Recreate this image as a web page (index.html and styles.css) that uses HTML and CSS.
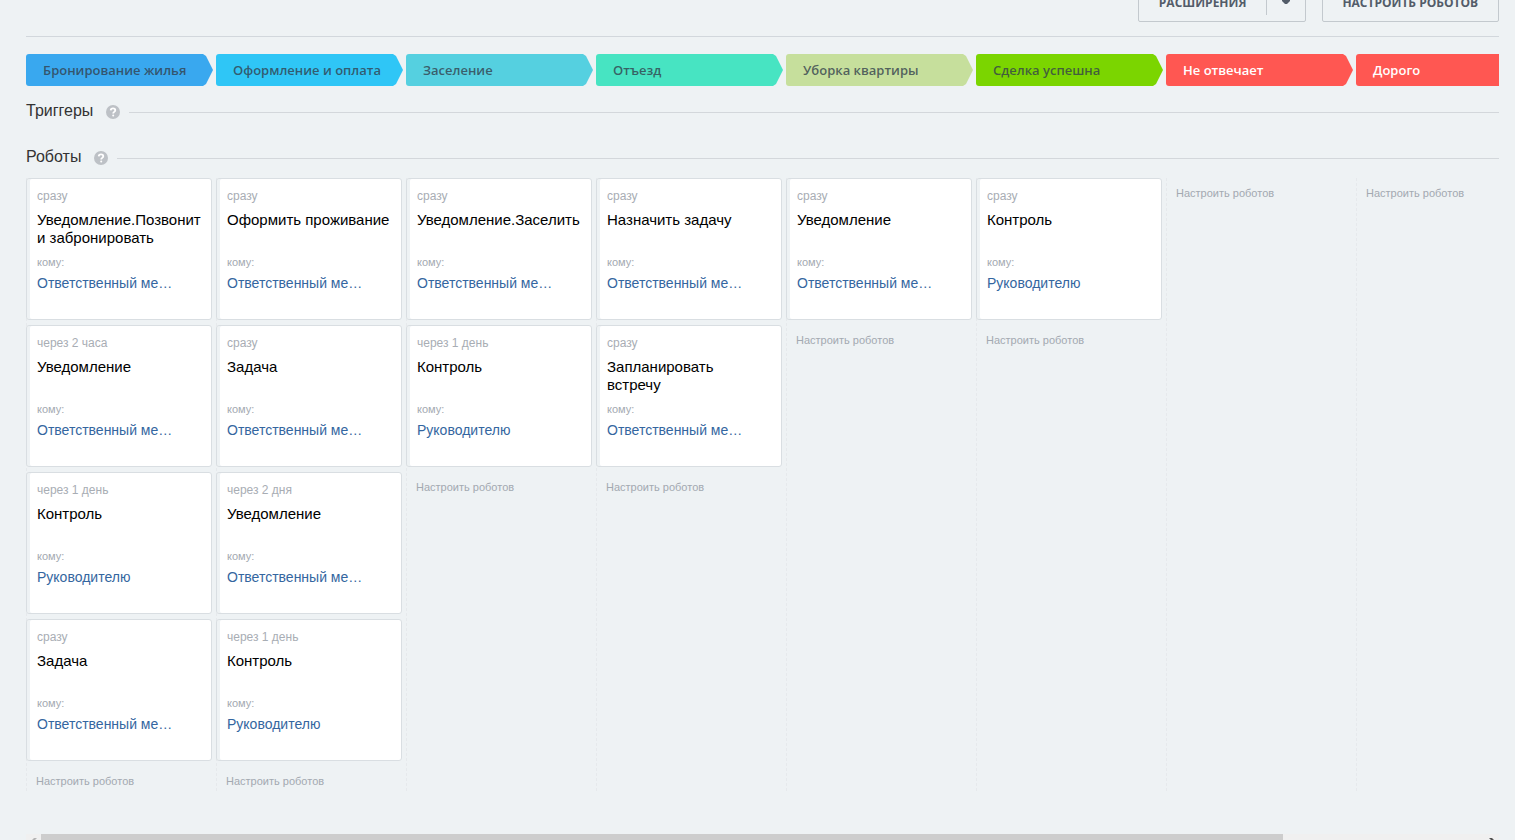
FILE: index.html
```
<!DOCTYPE html>
<html lang="ru">
<head>
    <meta charset="UTF-8">
    <meta name="viewport" content="width=device-width, initial-scale=1.0">
    <title>Роботы</title>
    <link rel="stylesheet" href="styles.css">
</head>
<body>
    <div class="page">
        <!-- Кнопки -->
        <div class="toolbar">
            <div class="btn-group">
                <button class="btn">Расширения</button>
                <button class="btn btn-arrow" aria-label="Меню">
                    <svg width="10" height="6" viewBox="0 0 10 6"><path d="M1 0h8v2L6 5H4L1 2z" fill="#535c69"/></svg>
                </button>
            </div>
            <button class="btn btn-single">Настроить роботов</button>
        </div>

        <!-- Стадии -->
        <div class="stages">
            <div class="stage stage-blue">Бронирование жилья</div>
            <div class="stage stage-sky">Оформление и оплата</div>
            <div class="stage stage-cyan">Заселение</div>
            <div class="stage stage-mint">Отъезд</div>
            <div class="stage stage-olive">Уборка квартиры</div>
            <div class="stage stage-green">Сделка успешна</div>
            <div class="stage stage-red">Не отвечает</div>
            <div class="stage stage-red">Дорого</div>
        </div>

        <h2 class="section-title">
            Триггеры
            <svg class="help" width="14" height="14" viewBox="0 0 14 14"><circle cx="7" cy="7" r="7" fill="#bdc1c6"/><path d="M4.700 5.400C4.800 4 5.700 3.400 7 3.400s2.300.7 2.300 1.900c0 1.500-2.100 1.600-2.100 3.100" fill="none" stroke="#fff" stroke-width="1.800"/><circle cx="7.200" cy="10.400" r="1" fill="#fff"/></svg>
        </h2>
        <h2 class="section-title">
            Роботы
            <svg class="help" width="14" height="14" viewBox="0 0 14 14"><circle cx="7" cy="7" r="7" fill="#bdc1c6"/><path d="M4.700 5.400C4.800 4 5.700 3.400 7 3.400s2.300.7 2.300 1.900c0 1.500-2.100 1.600-2.100 3.100" fill="none" stroke="#fff" stroke-width="1.800"/><circle cx="7.200" cy="10.400" r="1" fill="#fff"/></svg>
        </h2>

        <!-- Роботы по стадиям -->
        <div class="board">
            <div class="column">
                <div class="card">
                    <div class="time">сразу</div>
                    <div class="name">Уведомление.Позвонит и забронировать</div>
                    <div class="label">кому:</div>
                    <a class="person" href="#">Ответственный ме…</a>
                </div>
                <div class="card">
                    <div class="time">через 2 часа</div>
                    <div class="name">Уведомление</div>
                    <div class="label">кому:</div>
                    <a class="person" href="#">Ответственный ме…</a>
                </div>
                <div class="card">
                    <div class="time">через 1 день</div>
                    <div class="name">Контроль</div>
                    <div class="label">кому:</div>
                    <a class="person" href="#">Руководителю</a>
                </div>
                <div class="card">
                    <div class="time">сразу</div>
                    <div class="name">Задача</div>
                    <div class="label">кому:</div>
                    <a class="person" href="#">Ответственный ме…</a>
                </div>
                <a class="setup" href="#">Настроить роботов</a>
            </div>

            <div class="column">
                <div class="card">
                    <div class="time">сразу</div>
                    <div class="name">Оформить проживание</div>
                    <div class="label">кому:</div>
                    <a class="person" href="#">Ответственный ме…</a>
                </div>
                <div class="card">
                    <div class="time">сразу</div>
                    <div class="name">Задача</div>
                    <div class="label">кому:</div>
                    <a class="person" href="#">Ответственный ме…</a>
                </div>
                <div class="card">
                    <div class="time">через 2 дня</div>
                    <div class="name">Уведомление</div>
                    <div class="label">кому:</div>
                    <a class="person" href="#">Ответственный ме…</a>
                </div>
                <div class="card">
                    <div class="time">через 1 день</div>
                    <div class="name">Контроль</div>
                    <div class="label">кому:</div>
                    <a class="person" href="#">Руководителю</a>
                </div>
                <a class="setup" href="#">Настроить роботов</a>
            </div>

            <div class="column">
                <div class="card">
                    <div class="time">сразу</div>
                    <div class="name">Уведомление.Заселить</div>
                    <div class="label">кому:</div>
                    <a class="person" href="#">Ответственный ме…</a>
                </div>
                <div class="card">
                    <div class="time">через 1 день</div>
                    <div class="name">Контроль</div>
                    <div class="label">кому:</div>
                    <a class="person" href="#">Руководителю</a>
                </div>
                <a class="setup" href="#">Настроить роботов</a>
            </div>

            <div class="column">
                <div class="card">
                    <div class="time">сразу</div>
                    <div class="name">Назначить задачу</div>
                    <div class="label">кому:</div>
                    <a class="person" href="#">Ответственный ме…</a>
                </div>
                <div class="card">
                    <div class="time">сразу</div>
                    <div class="name">Запланировать встречу</div>
                    <div class="label">кому:</div>
                    <a class="person" href="#">Ответственный ме…</a>
                </div>
                <a class="setup" href="#">Настроить роботов</a>
            </div>

            <div class="column">
                <div class="card">
                    <div class="time">сразу</div>
                    <div class="name">Уведомление</div>
                    <div class="label">кому:</div>
                    <a class="person" href="#">Ответственный ме…</a>
                </div>
                <a class="setup" href="#">Настроить роботов</a>
            </div>

            <div class="column">
                <div class="card">
                    <div class="time">сразу</div>
                    <div class="name">Контроль</div>
                    <div class="label">кому:</div>
                    <a class="person" href="#">Руководителю</a>
                </div>
                <a class="setup" href="#">Настроить роботов</a>
            </div>

            <div class="column">
                <a class="setup" href="#">Настроить роботов</a>
            </div>

            <div class="column">
                <a class="setup" href="#">Настроить роботов</a>
            </div>
        </div>

        <!-- Полоса прокрутки -->
        <div class="scrollbar">
            <button class="scroll-btn scroll-left" aria-label="Влево">
                <svg width="15" height="17" viewBox="0 0 15 17"><path d="M8 4h3L7 8l4 4H8L4 8z" fill="currentColor"/></svg>
            </button>
            <div class="track"><div class="thumb"></div></div>
            <button class="scroll-btn" aria-label="Вправо">
                <svg width="15" height="17" viewBox="0 0 15 17"><path d="M5 4h3l4 4-4 4H5l4-4z" fill="currentColor"/></svg>
            </button>
        </div>
    </div>
</body>
</html>
```
FILE: styles.css
```
* {
    margin: 0;
    padding: 0;
    box-sizing: border-box;
}

body {
    font-family: 'Liberation Sans', Arial, sans-serif;
    background: #eef2f4;
    height: 100vh;
    overflow: hidden;
}

a {
    text-decoration: none;
}

.page {
    padding: 0 16px 0 26px;
}

/* Кнопки */
.toolbar {
    display: flex;
    justify-content: flex-end;
    align-items: flex-end;
    gap: 16px;
    height: 37px;
    padding-bottom: 14px;
    border-bottom: 1px solid #d2d7dc;
}

.btn-group {
    display: flex;
    align-items: center;
    border: 1px solid #c3c9ce;
    border-radius: 2px;
}

.btn {
    height: 37px;
    padding: 0 20px;
    border: none;
    background: none;
    color: #535c69;
    font-family: 'Open Sans', sans-serif;
    font-size: 12px;
    font-weight: 700;
    text-transform: uppercase;
    cursor: pointer;
}

.btn-arrow {
    height: 25px;
    padding: 0 14px 4px;
    border-left: 1px solid #c3c9ce;
}

.btn-single {
    height: 39px;
    padding: 0 20px 0 19px;
    border: 1px solid #c3c9ce;
    border-radius: 2px;
}

/* Стадии */
.stages {
    display: flex;
    gap: 3px;
    margin-top: 17px;
    overflow: hidden;
}

.stage {
    flex: 0 0 187px;
    height: 32px;
    padding-left: 17px;
    border-radius: 3px 0 0 3px;
    clip-path: polygon(0 0, calc(100% - 10px) 0, calc(100% - 7px) 2px, 100% 50%, calc(100% - 7px) calc(100% - 2px), calc(100% - 10px) 100%, 0 100%);
    color: rgba(51, 63, 76, 0.8);
    font-family: 'Open Sans', sans-serif;
    font-size: 13px;
    font-weight: 600;
    line-height: 32px;
    white-space: nowrap;
}

.stage-blue { background: #39a8ef; }
.stage-sky { background: #2fc6f6; }
.stage-cyan { background: #55d0e0; }
.stage-mint { background: #47e4c2; }
.stage-olive { background: #c6df9c; }
.stage-green { background: #7bd500; }

.stage-red {
    background: #ff5752;
    color: #fff;
}

/* Заголовки разделов */
.section-title {
    display: flex;
    align-items: center;
    height: 20px;
    margin-top: 15px;
    margin-bottom: 26px;
    color: #333;
    font-size: 16px;
    font-weight: 400;
}

.section-title + .section-title {
    margin-top: 0;
    margin-bottom: 11px;
}

.section-title::after {
    content: '';
    flex: 1;
    height: 1px;
    margin-top: 2px;
    background: #d3d7db;
}

.help {
    margin: 2px 9px 0 13px;
}

/* Доска */
.board {
    display: flex;
    overflow: hidden;
}

.column {
    flex: 0 0 190px;
    border-left: 1px dashed #e6e9ec;
}

.card {
    width: 186px;
    height: 142px;
    margin-left: -1px;
    margin-bottom: 5px;
    padding: 9px 11px 0 10px;
    background: #fff;
    border: 1px solid #d9dee2;
    border-radius: 3px;
    box-shadow: inset 3px 0 0 #eef2f4;
}

.time {
    color: #a8adb4;
    font-size: 12px;
    line-height: 16px;
}

.name {
    height: 36px;
    margin-top: 7px;
    color: #000;
    font-size: 15px;
    line-height: 18px;
}

.label {
    margin-top: 8px;
    color: #a3a9b1;
    font-size: 11px;
    line-height: 14px;
}

.person {
    display: block;
    margin-top: 5px;
    color: #3466a0;
    font-size: 14px;
    line-height: 18px;
}

.setup {
    display: block;
    height: 25px;
    padding-top: 8px;
    padding-left: 9px;
    color: #a3a9b1;
    font-size: 11px;
    line-height: 14px;
}

/* Прокрутка */
.scrollbar {
    display: flex;
    height: 17px;
    margin-top: 43px;
    background: #f0f0f0;
}

.scroll-btn {
    width: 15px;
    border: none;
    background: none;
    color: #505050;
}

.scroll-left {
    color: #b4b4b4;
}

.track {
    flex: 1;
}

.thumb {
    width: 86.1%;
    height: 100%;
    background: #cdcdcd;
}
```
